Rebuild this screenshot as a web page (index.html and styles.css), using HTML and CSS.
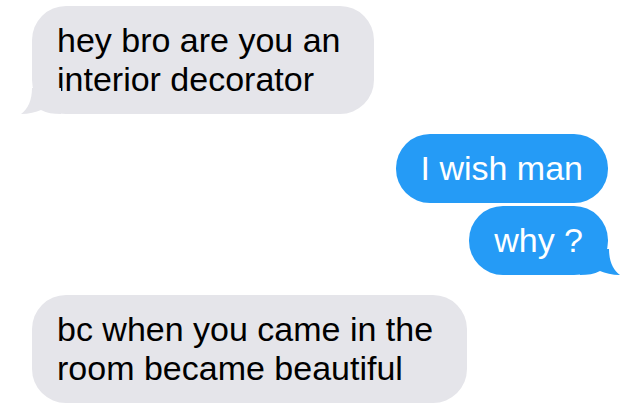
FILE: index.html
```html
<!DOCTYPE html>
<html lang="en">
<head>
    <meta charset="UTF-8">
    <meta name="viewport" content="width=device-width, initial-scale=1.0">
    <title>Messages</title>
    <link rel="stylesheet" href="styles.css">
</head>
<body>

    <div class="thread">
        <div class="group in">
            <div class="bubble tail w-342">
                hey bro are you an interior decorator
                <svg class="tail-shape" viewBox="0 0 40 26"><path d="M11 0 C11 12 7 21 0 26 C8 26 15 24 20 22 C26 25 32 26 40 26 L40 0 Z"/></svg>
            </div>
        </div>

        <div class="group out">
            <div class="bubble">I wish man</div>
            <div class="bubble tail">
                why ?
                <svg class="tail-shape" viewBox="0 0 40 26"><path d="M11 0 C11 12 7 21 0 26 C8 26 15 24 20 22 C26 25 32 26 40 26 L40 0 Z"/></svg>
            </div>
        </div>

        <div class="group in">
            <div class="bubble w-435">bc when you came in the room became beautiful</div>
        </div>
    </div>

</body>
</html>
```

FILE: styles.css
```css
body {
    font-family: "Liberation Sans", Arial, sans-serif;
    margin: 0;
    background: white;
    color: black;
}

.thread {
    display: flex;
    flex-direction: column;
    gap: 20px;
    padding: 6px 32px 0 32px;
}

.group {
    display: flex;
    flex-direction: column;
    gap: 3px;
}

.group.in {
    align-items: flex-start;
}

.group.out {
    align-items: flex-end;
}

.bubble {
    position: relative;
    padding: 15px 25px;
    font-size: 34px;
    line-height: 39px;
    border-radius: 34px;
}

.in .bubble {
    background: #e5e5ea;
    color: black;
}

.out .bubble {
    background: #259bf6;
    color: white;
}

.w-342 {
    width: 342px;
    box-sizing: border-box;
}

.w-435 {
    width: 435px;
    box-sizing: border-box;
}

.tail-shape {
    position: absolute;
    bottom: 0;
    width: 40px;
    height: 26px;
}

.in .tail-shape {
    left: -11px;
    fill: #e5e5ea;
}

.out .tail-shape {
    right: -12px;
    fill: #259bf6;
    transform: scaleX(-1);
}
```
